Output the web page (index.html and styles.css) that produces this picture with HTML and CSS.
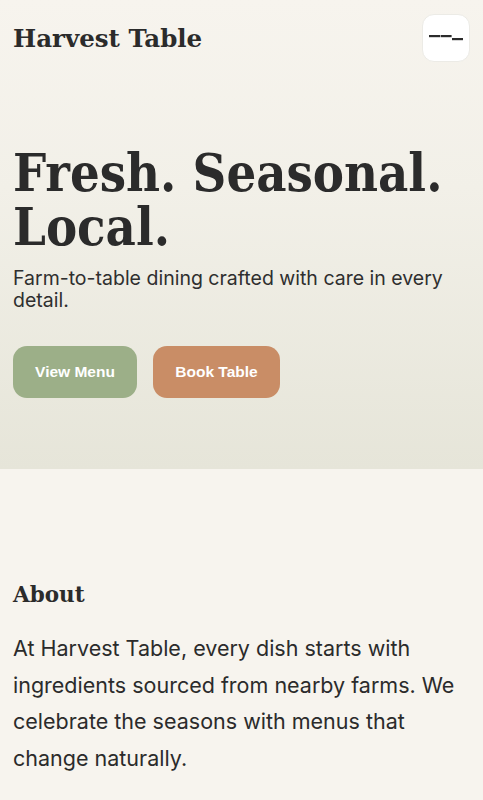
FILE: index.html
```html
<!DOCTYPE html>
<html>
<head>
<meta charset="utf-8">
<link rel="stylesheet" href="styles.css">
</head>
<body>
<div class="top">
  <header class="header">
    <div class="logo">Harvest Table</div>
    <button class="menu" aria-label="Menu">
      <svg width="34" height="10" viewBox="0 0 34 10">
        <rect x="0" y="2" width="11" height="2.2" fill="#2b2b2b"/>
        <rect x="11.6" y="2" width="11" height="2.2" fill="#2b2b2b"/>
        <rect x="23" y="5" width="11" height="2.2" fill="#2b2b2b"/>
      </svg>
    </button>
  </header>
  <section class="hero">
    <h1 class="title">Fresh. Seasonal. Local.</h1>
    <p class="sub">Farm-to-table dining crafted with care in every detail.</p>
    <div class="actions">
      <a class="btn btn-green">View Menu</a>
      <a class="btn btn-orange">Book Table</a>
    </div>
  </section>
</div>
<section class="about">
  <h2 class="about-title">About</h2>
  <p class="about-text">At Harvest Table, every dish starts with ingredients sourced from nearby farms. We celebrate the seasons with menus that change naturally.</p>
</section>
</body>
</html>
```
FILE: styles.css
```css
* { box-sizing: border-box; }
body {
  margin: 0;
  background: #f7f4ee;
  color: #2b2b2b;
  font-family: Inter, "Noto Sans", sans-serif;
}
.top {
  background: linear-gradient(180deg, #f7f4ee 0%, #f2f0e8 40%, #e6e5d9 100%);
  height: 469px;
}
.header {
  display: flex;
  justify-content: space-between;
  align-items: center;
  padding: 14px 13px 0 13px;
}
.logo {
  font-family: "DejaVu Serif", serif;
  font-weight: bold;
  font-size: 24.5px;
  color: #2b2b2b;
}
.menu {
  width: 48px;
  height: 48px;
  border: 1px solid #ecebe6;
  border-radius: 12px;
  background: #ffffff;
  display: flex;
  align-items: center;
  justify-content: center;
  padding: 0;
}
.hero {
  padding: 0 13px;
}
.title {
  font-family: "DejaVu Serif Condensed", "DejaVu Serif", serif;
  font-weight: bold;
  font-size: 52px;
  line-height: 54px;
  margin: 84px 0 0 0;
  color: #2b2b2b;
}
.sub {
  font-size: 19.5px;
  line-height: 22px;
  margin: 13px 0 0 0;
  color: #2f2f2f;
}
.actions {
  display: flex;
  gap: 16px;
  margin-top: 35px;
}
.btn {
  display: flex;
  align-items: center;
  justify-content: center;
  height: 52px;
  border-radius: 14px;
  font-family: "Liberation Sans", Arial, sans-serif;
  font-weight: bold;
  font-size: 15.5px;
  color: #ffffff;
}
.btn-green { background: #9caf88; width: 124px; }
.btn-orange { background: #c98d66; width: 127px; }
.about {
  padding: 113px 13px 0 13px;
}
.about-title {
  font-family: "DejaVu Serif", serif;
  font-weight: bold;
  font-size: 21.5px;
  margin: 0;
}
.about-text {
  font-size: 21.5px;
  line-height: 36.5px;
  margin: 23px 0 0 0;
}
```
